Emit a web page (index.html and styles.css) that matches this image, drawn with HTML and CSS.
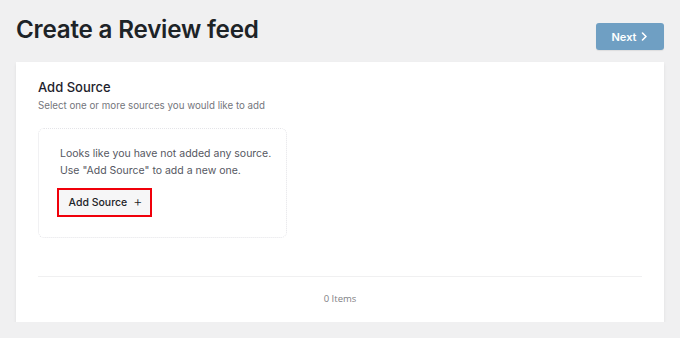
FILE: index.html
```html
<!DOCTYPE html>
<html>
<head>
<meta charset="utf-8">
<link rel="stylesheet" href="styles.css">
</head>
<body>
<div class="page">
  <div class="header">
    <h1 class="title">Create a Review feed</h1>
    <button class="next-btn">Next <svg class="chev" width="7" height="9" viewBox="0 0 7 9"><path d="M1.5 1 L5 4.5 L1.5 8" fill="none" stroke="#fff" stroke-width="1.6" stroke-linecap="round" stroke-linejoin="round"/></svg></button>
  </div>
  <div class="card">
    <h2 class="card-title">Add Source</h2>
    <p class="card-sub">Select one or more sources you would like to add</p>
    <div class="empty-box">
      <p class="empty-text">Looks like you have not added any source.</p>
      <p class="empty-text">Use "Add Source" to add a new one.</p>
      <button class="add-btn">Add Source <span class="plus">+</span></button>
    </div>
    <div class="footer">
      <span class="count">0 Items</span>
    </div>
  </div>
</div>
</body>
</html>
```
FILE: styles.css
```css
html, body {
  margin: 0;
  padding: 0;
  background: #f0f0f1;
  font-family: Inter, "Noto Sans", sans-serif;
}
.page {
  padding: 0 16px;
  width: 648px;
}
.header {
  display: flex;
  justify-content: space-between;
  align-items: flex-start;
  height: 62px;
}
.title {
  margin: 14px 0 0 0;
  font-size: 24.2px;
  font-weight: 600;
  color: #1d2327;
  letter-spacing: -0.2px;
  line-height: 32px;
}
.next-btn {
  margin-top: 23px;
  width: 68px;
  height: 27px;
  background: #6f9fc3;
  border: none;
  border-radius: 3px;
  color: #fff;
  font-family: Inter, sans-serif;
  font-size: 11px;
  font-weight: 600;
  display: flex;
  align-items: center;
  justify-content: center;
  gap: 5px;
  padding: 0;
  box-shadow: 0 1px 1px rgba(0,0,0,0.08);
}
.card {
  background: #fff;
  padding: 16px 22px 0 22px;
  height: 260px;
  box-sizing: border-box;
  box-shadow: 0 2px 3px rgba(0,0,0,0.08);
}
.card-title {
  margin: 0;
  font-size: 13px;
  font-weight: 500;
  color: #1e1e2d;
  line-height: 18px;
}
.card-sub {
  margin: 3px 0 0 0;
  font-size: 9.75px;
  color: #74767c;
  line-height: 14px;
}
.empty-box {
  margin-top: 15px;
  width: 249px;
  height: 110px;
  box-sizing: border-box;
  border: 1px dotted #e4e4e8;
  border-radius: 6px;
  padding: 16px 0 0 21px;
}
.empty-text {
  margin: 0;
  font-size: 10.5px;
  color: #55575f;
  line-height: 17px;
}
.add-btn {
  margin-top: 9px;
  margin-left: -3px;
  width: 95px;
  height: 29px;
  border: 2px solid #f0000a;
  background: #f6f6f7;
  font-family: Inter, sans-serif;
  font-size: 10.5px;
  font-weight: 500;
  color: #1d2327;
  padding: 0 0 1px 2px;
  display: flex;
  align-items: center;
  justify-content: center;
  gap: 6px;
  box-sizing: border-box;
}
.plus {
  font-weight: 300;
  font-size: 14px;
  line-height: 14px;
  margin-top: -2px;
}
.footer {
  margin-top: 38px;
  border-top: 1px solid #f0f0f1;
  height: 43px;
  display: flex;
  align-items: center;
  justify-content: center;
}
.count {
  font-family: "Open Sans", sans-serif;
  font-size: 9.5px;
  color: #7f8185;
}
```
